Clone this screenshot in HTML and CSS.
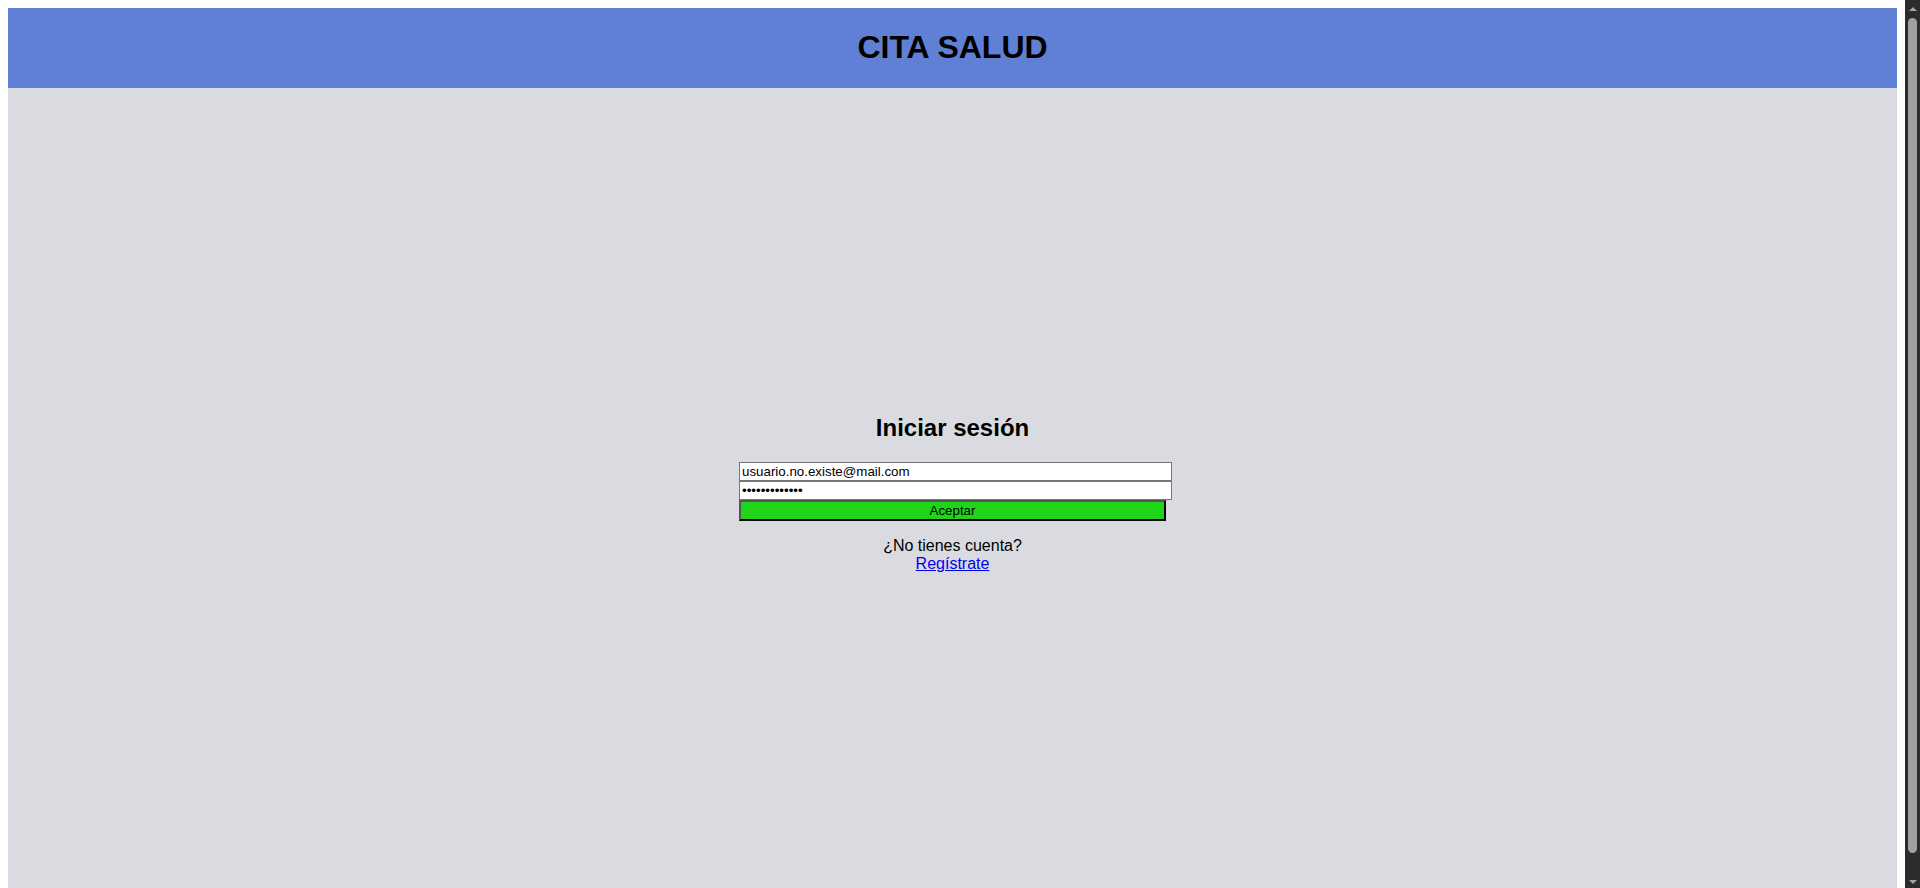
FILE: index.html
```html
<!DOCTYPE html>
<html lang="es">
<head>
<meta charset="utf-8">
<title>Cita Salud</title>
<link rel="stylesheet" href="styles.css">
</head>
<body>
<header class="site-header">
  <h1 class="site-title">CITA SALUD</h1>
</header>
<main class="site-main">
  <div class="login">
    <h2 class="login-title">Iniciar sesión</h2>
    <form class="login-form">
      <input class="field" type="email" value="usuario.no.existe@mail.com">
      <input class="field" type="password" value="1234567890123">
      <button class="submit" type="button">Aceptar</button>
    </form>
    <p class="signup">¿No tienes cuenta?<br><a class="signup-link" href="#">Regístrate</a></p>
  </div>
</main>
<div class="scrollbar" aria-hidden="true">
  <div class="sb-button"><span class="sb-arrow sb-arrow-up"></span></div>
  <div class="sb-track"><div class="sb-thumb"></div></div>
  <div class="sb-button"><span class="sb-arrow sb-arrow-down"></span></div>
</div>
</body>
</html>
```

FILE: styles.css
```css
html, body {
  font-family: "Liberation Sans", Arial, sans-serif;
}
body {
  margin: 8px 23px 8px 8px;
  background: #ffffff;
  color: #000;
}
.site-header {
  display: flex;
  justify-content: center;
  background: #6080d5;
}
.site-title {
  font-size: 32px;
  font-weight: bold;
  margin: 21.44px 0;
}
.site-main {
  display: flex;
  flex-direction: column;
  align-items: center;
  justify-content: center;
  min-height: calc(100vh - 80px);
  background: #dadbe0;
}
.login {
  width: 427px;
  text-align: center;
}
.login-title {
  font-size: 24px;
  font-weight: bold;
  margin: 20px 0;
}
.login-form {
  margin: 0;
  text-align: left;
}
.field {
  display: block;
  box-sizing: content-box;
  width: 100%;
  margin: 0;
  padding: 1px 2px;
  border: 1px solid #767676;
  background: #fff;
  font-family: "Liberation Sans", Arial, sans-serif;
  font-size: 13.333px;
  color: #000;
  outline: none;
}
.submit {
  display: block;
  box-sizing: border-box;
  width: 100%;
  margin: 0;
  padding: 1px 6px;
  background: #1ed51a;
  border-style: solid;
  border-width: 2px;
  border-color: #555 #000 #000 #555;
  font-family: "Liberation Sans", Arial, sans-serif;
  font-size: 13.333px;
  color: #000;
}
.signup {
  font-size: 16px;
  margin: 16px 0;
}
.signup-link {
  color: #0000ee;
  text-decoration: underline;
}

/* simulated browser scrollbar overlay */
.scrollbar {
  position: fixed;
  top: 0;
  right: 0;
  bottom: 0;
  width: 15px;
  background: #2c2c2c;
  display: flex;
  flex-direction: column;
}
.sb-button {
  height: 15px;
  flex: none;
  display: flex;
  align-items: center;
  justify-content: center;
}
.sb-arrow {
  width: 0;
  height: 0;
  border-left: 4px solid transparent;
  border-right: 4px solid transparent;
}
.sb-arrow-up {
  border-bottom: 4px solid #a3a3a3;
  margin-top: 2px;
}
.sb-arrow-down {
  border-top: 4px solid #a3a3a3;
  margin-top: 2px;
}
.sb-track {
  flex: 1;
  display: flex;
  padding: 3px 3px 20px;
}
.sb-thumb {
  flex: 1;
  background: #a0a0a0;
  border-radius: 5px;
}
```
